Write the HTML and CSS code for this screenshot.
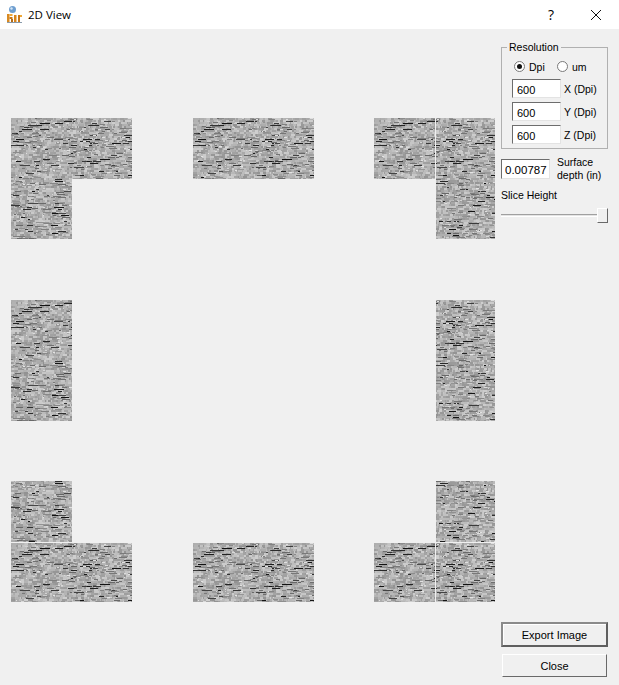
FILE: index.html
```html
<!DOCTYPE html>
<html lang="en">
<head>
    <meta charset="UTF-8">
    <meta name="viewport" content="width=device-width, initial-scale=1.0">
    <title>2D View</title>
    <link rel="stylesheet" href="styles.css">
</head>
<body>

    <header class="titlebar">
        <svg class="app-icon" width="15" height="17" viewBox="0 0 15 17">
            <circle cx="5.5" cy="3.5" r="3.5" fill="#6f9fd0"/>
            <circle cx="4.5" cy="2.5" r="1.2" fill="#d5e6f5"/>
            <rect x="0" y="8" width="2.5" height="8" fill="#d98a22"/>
            <rect x="2.5" y="8" width="3" height="2" fill="#f0a838"/>
            <rect x="2.5" y="11" width="3" height="2" fill="#c87818"/>
            <rect x="4" y="13" width="2" height="3" fill="#b86c14"/>
            <rect x="7" y="9" width="2.5" height="7" fill="#d8851c"/>
            <rect x="11" y="9" width="2" height="7" fill="#c87818"/>
            <rect x="13" y="9" width="2" height="2" fill="#f0a838"/>
            <rect x="0" y="16" width="15" height="1" fill="#8a9bab"/>
        </svg>
        <span class="title">2D View</span>
        <span class="help">?</span>
        <svg class="close-x" width="12" height="12" viewBox="0 0 12 12">
            <path d="M1 1L11 11M11 1L1 11" stroke="#111" stroke-width="1" fill="none"/>
        </svg>
    </header>

    <main class="content">
        <canvas id="sliceView" class="slice-view" width="501" height="656"></canvas>

        <aside class="panel">
            <fieldset class="group">
                <legend>Resolution</legend>
                <div class="radio-row">
                    <label class="radio"><span class="dot checked"></span>Dpi</label>
                    <label class="radio"><span class="dot"></span>um</label>
                </div>
                <div class="field"><input class="box" type="text" value="600"><span>X (Dpi)</span></div>
                <div class="field"><input class="box" type="text" value="600"><span>Y (Dpi)</span></div>
                <div class="field"><input class="box" type="text" value="600"><span>Z (Dpi)</span></div>
            </fieldset>

            <div class="surface">
                <input class="box" type="text" value="0.00787">
                <span>Surface<br>depth (in)</span>
            </div>

            <div class="slice-label">Slice Height</div>
            <div class="slider"><div class="thumb"></div></div>

            <div class="buttons">
                <button class="btn btn-default" type="button">Export Image</button>
                <button class="btn" type="button">Close</button>
            </div>
        </aside>
    </main>

    <script src="app.js"></script>
</body>
</html>
```

FILE: styles.css
```css
html, body {
    height: 100%;
}

body {
    font-family: "Liberation Sans", Arial, sans-serif;
    font-size: 10.5px;
    color: #000;
    background-color: #f0f0f0;
    margin: 0;
    padding: 0;
    overflow: hidden;
}

.titlebar {
    display: flex;
    align-items: center;
    height: 29px;
    background-color: #fff;
    padding-left: 7px;
}

.app-icon {
    margin-right: 6px;
}

.title {
    font-family: "Open Sans", sans-serif;
    font-size: 11.5px;
    flex: 1;
}

.help {
    font-family: "Open Sans", sans-serif;
    font-size: 14px;
    margin-right: 36px;
}

.close-x {
    margin-right: 17px;
}

.content {
    display: flex;
    height: 656px;
}

.slice-view {
    display: block;
    width: 501px;
    height: 656px;
}

.panel {
    display: flex;
    flex-direction: column;
    width: 107px;
    padding-top: 14px;
}

.group {
    margin: 0;
    padding: 7px 0 0 10px;
    height: 106px;
    box-sizing: border-box;
    border: 1px solid #b0b0b0;
}

.group legend {
    padding: 0 2px;
    margin-left: -5px;
    line-height: 9px;
}

.radio-row {
    display: flex;
    height: 15px;
    margin: 0 0 5px 2px;
}

.radio {
    display: flex;
    align-items: center;
    width: 43px;
}

.dot {
    width: 9px;
    height: 9px;
    border: 1px solid #7a7a7a;
    border-radius: 50%;
    background-color: #fff;
    margin-right: 4px;
    position: relative;
}

.dot.checked::after {
    content: "";
    position: absolute;
    left: 2px;
    top: 2px;
    width: 5px;
    height: 5px;
    border-radius: 50%;
    background-color: #111;
}

.field {
    display: flex;
    align-items: center;
    gap: 3px;
    margin-bottom: 4px;
}

.box {
    width: 49px;
    height: 19px;
    box-sizing: border-box;
    padding: 2px 0 0 4px;
    margin: 0;
    font-family: "Liberation Sans", Arial, sans-serif;
    font-size: 11px;
    background-color: #fff;
    border: 1px solid;
    border-color: #6d6d6d #e3e3e3 #e3e3e3 #6d6d6d;
    border-radius: 0;
    outline: none;
}

.surface {
    display: flex;
    align-items: center;
    gap: 7px;
    margin-top: 9px;
    line-height: 13px;
    height: 22px;
}

.surface .box {
    flex: none;
    height: 20px;
    padding-left: 3px;
    font-size: 11.5px;
}

.slice-label {
    margin-top: 9px;
    line-height: 13px;
}

.slider {
    position: relative;
    height: 3px;
    width: 107px;
    margin-top: 12px;
    background-color: #e4e4e4;
    border-top: 1px solid #a0a0a0;
    border-bottom: 1px solid #fff;
    box-sizing: border-box;
}

.thumb {
    position: absolute;
    right: 0;
    top: -7px;
    width: 11px;
    height: 15px;
    box-sizing: border-box;
    background-color: #f0f0f0;
    border: 1px solid;
    border-color: #fff #696969 #696969 #fff;
}

.buttons {
    display: flex;
    flex-direction: column;
    align-items: center;
    gap: 7px;
    margin-top: auto;
    margin-bottom: 8px;
}

.btn {
    width: 105px;
    height: 23px;
    padding: 0;
    font-family: "Liberation Sans", Arial, sans-serif;
    font-size: 11px;
    color: #000;
    background-color: #f0f0f0;
    border: 1px solid;
    border-color: #fff #696969 #696969 #fff;
    border-radius: 0;
}

.btn-default {
    width: 107px;
    height: 25px;
    border: 2px solid;
    border-color: #8a8a8a #5f5f5f #5f5f5f #8a8a8a;
    box-shadow: inset 1px 1px 0 #fff;
}
```

FILE: app.js
```js
// slice tiles in window coordinates: x, y, w, h and where they read from the texture
const tiles = [
    [11, 118, 121, 61, 0, 0], [11, 179, 61, 60, 0, 61],
    [193, 118, 121, 61, 0, 0],
    [374, 118, 61, 61, 0, 0], [436, 118, 59, 61, 62, 0], [436, 179, 59, 60, 62, 61],
    [11, 300, 61, 121, 0, 0],
    [436, 300, 59, 121, 62, 0],
    [11, 481, 61, 61, 0, 61], [11, 543, 121, 59, 0, 0],
    [193, 543, 121, 59, 0, 0],
    [374, 543, 61, 59, 0, 0], [436, 481, 59, 61, 62, 61], [436, 543, 59, 59, 62, 0]
];

const titleHeight = 29;
const size = 122;

let seed = 48271;
function rnd() {
    seed = (seed * 16807) % 2147483647;
    return seed / 2147483647;
}

function shade(v) {
    const g = Math.max(0, Math.min(255, Math.round(v)));
    return `rgb(${g},${g},${g})`;
}

function makeTexture() {
    const tex = document.createElement('canvas');
    tex.width = size;
    tex.height = size;
    const c = tex.getContext('2d');

    // mottled grey, blocks of one or two pixels high
    for (let y = 0; y < size; y += 2) {
        let x = 0;
        while (x < size) {
            const run = 1 + Math.floor(rnd() * 4);
            c.fillStyle = shade(176 + (rnd() - 0.5) * 60);
            c.fillRect(x, y, run, 2);
            x += run;
        }
    }

    // thin mid grey mortar lines
    for (let i = 0; i < 320; i++) {
        c.fillStyle = shade(100 + rnd() * 50);
        c.fillRect(Math.floor(rnd() * size), Math.floor(rnd() * size), 2 + Math.floor(rnd() * 7), 1);
    }

    // short black dashes, the horizontal gaps of the surface
    for (let i = 0; i < 130; i++) {
        c.fillStyle = shade(15 + rnd() * 60);
        c.fillRect(Math.floor(rnd() * size), Math.floor(rnd() * size / 2) * 2 + 1, 2 + Math.floor(rnd() * 9), 1);
    }

    // pale flecks
    for (let i = 0; i < 160; i++) {
        c.fillStyle = shade(200 + rnd() * 30);
        c.fillRect(Math.floor(rnd() * size), Math.floor(rnd() * size), 1 + Math.floor(rnd() * 3), 1);
    }
    return tex;
}

function drawSlices() {
    const ctx = document.getElementById('sliceView').getContext('2d');
    const tex = makeTexture();
    tiles.forEach(t => {
        ctx.drawImage(tex, t[4], t[5], t[2], t[3], t[0], t[1] - titleHeight, t[2], t[3]);
    });
}

drawSlices();
```
